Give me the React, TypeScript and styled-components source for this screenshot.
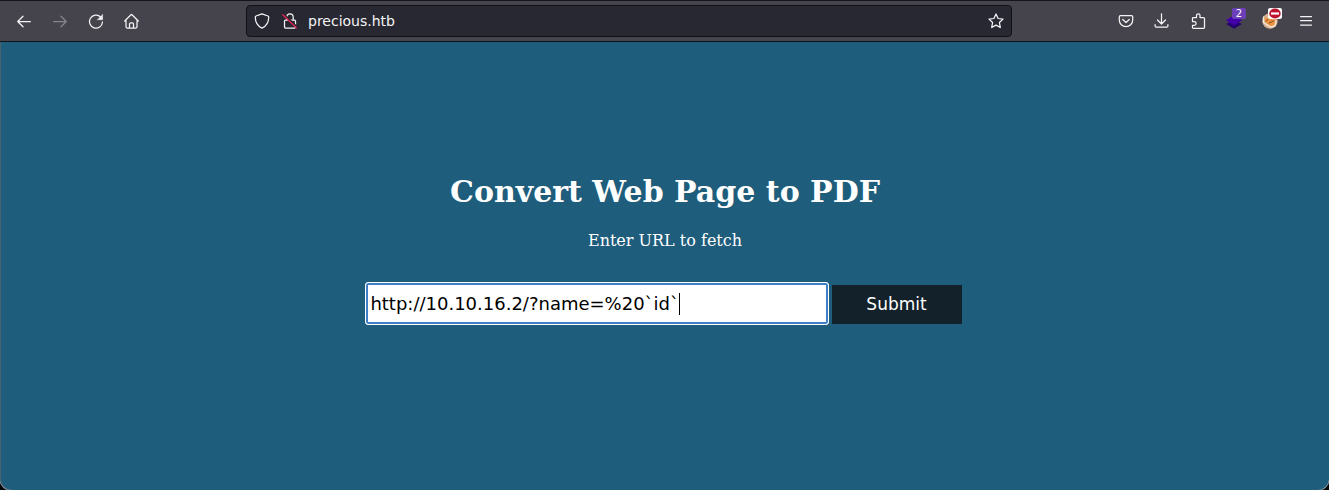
import React, { useState } from 'react';
import styled, { createGlobalStyle } from 'styled-components';

const GlobalStyle = createGlobalStyle`
  *, *::before, *::after { box-sizing: border-box; }
  body { margin: 0; background: #050608; overflow: hidden; }
`;

const Window = styled.div`
  display: flex;
  flex-direction: column;
  width: 100%;
  height: 490px;
  background: #1e5d7b;
  border-radius: 0 0 12px 12px;
  box-shadow: 0 0 0 1px #85929a;
  overflow: hidden;
`;

const Toolbar = styled.header`
  display: flex;
  align-items: center;
  justify-content: space-between;
  flex: none;
  height: 42px;
  padding: 0 5px 0 6px;
  background: #45444c;
  border-top: 1px solid #15141a;
  border-bottom: 1px solid #10131a;
`;

const ButtonGroup = styled.nav`
  display: flex;
  height: 40px;
`;

const ToolButton = styled.span<{ $dim?: boolean }>`
  display: flex;
  align-items: center;
  justify-content: center;
  position: relative;
  width: 36px;
  height: 40px;
  color: ${(p) => (p.$dim ? '#85848a' : '#f4f4f6')};
`;

const Icon = styled.svg`
  display: block;
  width: 16px;
  height: 16px;
  fill: none;
  stroke: currentColor;
  stroke-width: 1.25;
  stroke-linecap: round;
  stroke-linejoin: round;
`;

const Badge = styled.span<{ $white?: boolean }>`
  position: absolute;
  top: 7px;
  left: 16px;
  display: flex;
  align-items: center;
  justify-content: center;
  width: 14px;
  height: 11px;
  border-radius: 2px;
  background: ${(p) => (p.$white ? '#fff' : '#6b3fb8')};
  color: #fff;
  font: 10px/11px 'DejaVu Sans', sans-serif;
`;

const BlockSign = styled.svg`
  display: block;
  width: 12px;
  height: 11px;
`;

const AddressBar = styled.div`
  display: flex;
  align-items: center;
  width: 766px;
  height: 32px;
  margin-left: 96px;
  margin-right: auto;
  padding: 0 7px;
  border: 1px solid #111118;
  border-radius: 4px;
  background: #282833;
  color: #f4f4f6;
`;

const Address = styled.span`
  flex: 1;
  margin-left: 10px;
  font: 14px/20px 'DejaVu Sans', sans-serif;
`;

const LockSlot = styled.span`
  margin-left: 12px;
`;

const Page = styled.main`
  flex: 1;
  display: flex;
  flex-direction: column;
  align-items: center;
  padding-top: 130px;
  border-left: 1px solid #49606f;
  border-radius: 0 0 12px 12px;
  color: #fff;
  font-family: 'DejaVu Serif', serif;
`;

const Title = styled.h1`
  margin: 0;
  font-size: 30px;
  line-height: 40px;
  font-weight: 700;
`;

const Prompt = styled.p`
  margin: 19px 0 0;
  font-size: 16px;
  line-height: 20px;
`;

const Form = styled.form`
  display: flex;
  align-items: flex-start;
  gap: 3px;
  margin: 31px 3px 0 0;
`;

const Field = styled.div`
  display: flex;
  align-items: center;
  width: 464px;
  height: 43px;
  padding-left: 2px;
  border: 1px solid #fff;
  border-radius: 3px;
  background: #fff;
  box-shadow: inset 0 0 0 2px #3f7fc8;
  color: #000;
  font: 18px/22px 'DejaVu Sans', sans-serif;
`;

const FieldText = styled.span`
  padding-left: 2.4px;
  white-space: pre;
`;

const Caret = styled.span`
  width: 1px;
  height: 22px;
  margin-left: -0.4px;
  background: #000;
`;

const Submit = styled.button`
  width: 130px;
  height: 39px;
  margin-top: 3px;
  padding: 0 1px 2px 0;
  border: 0;
  background: #13212a;
  color: #fff;
  font: 17px/20px 'DejaVu Sans', sans-serif;
`;

export default function App() {
  const [url] = useState('http://10.10.16.2/?name=%20`id`');
  return (
    <>
      <GlobalStyle />
      <Window>
        <Toolbar>
          <ButtonGroup>
            <ToolButton>
              <Icon viewBox="0 0 16 16"><path d="M14.4 8.5H1.7M7 3.2 1.7 8.5 7 13.8" /></Icon>
            </ToolButton>
            <ToolButton $dim>
              <Icon viewBox="0 0 16 16"><path d="M1.6 8.5h12.7M9 3.2l5.3 5.3L9 13.8" /></Icon>
            </ToolButton>
            <ToolButton>
              <Icon viewBox="0 0 16 16">
                <path d="M12.6 4A6.500 6.500 0 1 0 14.500 9" />
                <path d="M14.600 1.700v5H9.600Z" fill="currentColor" strokeWidth=".5" />
              </Icon>
            </ToolButton>
            <ToolButton>
              <Icon viewBox="0 0 16 16">
                <path d="M.7 8 7 1.700q.5-.5 1 0L14.300 8M2 6.800v7q0 1.200 1.200 1.200h8.600q1.200 0 1.200-1.200v-7M5.500 15v-4q0-1.200 1.200-1.200h1.600q1.200 0 1.200 1.200v4" />
              </Icon>
            </ToolButton>
          </ButtonGroup>

          <AddressBar>
            <Icon viewBox="0 0 16 16">
              <path d="M8 .9 14 3q.7.2.7 1c0 5.500-2 9-6.700 11.100C3.300 13 1.300 9.500 1.300 4q0-.8.7-1Z" />
            </Icon>
            <LockSlot>
              <Icon viewBox="0 0 16 16">
                <path d="M4.800 7V4.100a3.200 3.200 0 0 1 6.400 0V7M3.500 7h9q1 0 1 1v6q0 1-1 1h-9q-1 0-1-1V8q0-1 1-1Z" />
                <path d="M1.500 1.200 15 14" stroke="#282833" strokeWidth="2" />
                <path d="M.8 1.800 14.300 14.700" stroke="#e02050" strokeWidth="1.400" />
              </Icon>
            </LockSlot>
            <Address>precious.htb</Address>
            <Icon viewBox="0 0 16 16">
              <path d="m8 1 2.100 4.500 4.900.6-3.600 3.400.9 5L8 12.100l-4.300 2.400.9-5L1 6.100l4.900-.6Z" />
            </Icon>
          </AddressBar>

          <ButtonGroup>
            <ToolButton>
              <Icon viewBox="0 0 16 16">
                <path d="M2.500 2.500h11q1.200 0 1.200 1.200v3.600a6.700 6.200 0 0 1-13.400 0V3.700q0-1.200 1.200-1.200ZM4.700 6.500 8 9.500l3.300-3" />
              </Icon>
            </ToolButton>
            <ToolButton>
              <Icon viewBox="0 0 16 16">
                <path d="M7.500 .8v10M3.500 7l4 4 4-4M1.100 11.500v1.500q0 1.200 1.200 1.200h10.400q1.200 0 1.200-1.200v-1.500" />
              </Icon>
            </ToolButton>
            <ToolButton>
              <Icon viewBox="0 0 16 16">
                <path d="M2.500 7.500V5.300q0-.8.8-.8H6.500V2.500a1.750 1.750 0 0 1 3.500 0v2h3.500q1 0 1 1V14.500q0 .8-.8.8H3.300q-.8 0-.8-.8V12.300h1.800a1.700 1.700 0 0 0 0-3.600H2.500Z" />
              </Icon>
            </ToolButton>
            <ToolButton>
              <Icon viewBox="0 0 16 16">
                <path d="m8 6.500 7.800 4.500L8 15.800.2 11Z" fill="#250070" stroke="none" />
                <path d="m8 2 8 5.300L8 12.500 0 7.300Z" fill="#4300a8" stroke="none" />
              </Icon>
              <Badge>2</Badge>
            </ToolButton>
            <ToolButton>
              <Icon viewBox="0 0 16 16">
                <circle cx="8" cy="8" r="7.700" fill="#d9b293" stroke="none" />
                <path d="m2.500 4 4 1.500L13.500 7v4.500L9 13.500 3 9Z" fill="#ee943f" stroke="none" />
                <path d="M1.500 4v5.500L8.500 14l4.500-1.200 1-4.800" stroke="#f6e9dc" strokeWidth="1.300" />
                <path d="M4 8 6 6.500M7 10l4.500-2" stroke="#84502d" strokeWidth="1" />
              </Icon>
              <Badge $white>
                <BlockSign viewBox="0 0 12 11">
                  <ellipse cx="6" cy="5.500" rx="5.700" ry="5" fill="#bd1530" />
                  <path d="M2 4.400h8v2.200H2Z" fill="#fff" />
                </BlockSign>
              </Badge>
            </ToolButton>
            <ToolButton>
              <Icon viewBox="0 0 16 16"><path d="M2.600 3.500h10.900M2.600 7.700h10.900M2.600 12h10.900" /></Icon>
            </ToolButton>
          </ButtonGroup>
        </Toolbar>

        <Page>
          <Title>Convert Web Page to PDF</Title>
          <Prompt>Enter URL to fetch</Prompt>
          <Form>
            <Field>
              <FieldText>{url}</FieldText>
              <Caret />
            </Field>
            <Submit type="button">Submit</Submit>
          </Form>
        </Page>
      </Window>
    </>
  );
}
